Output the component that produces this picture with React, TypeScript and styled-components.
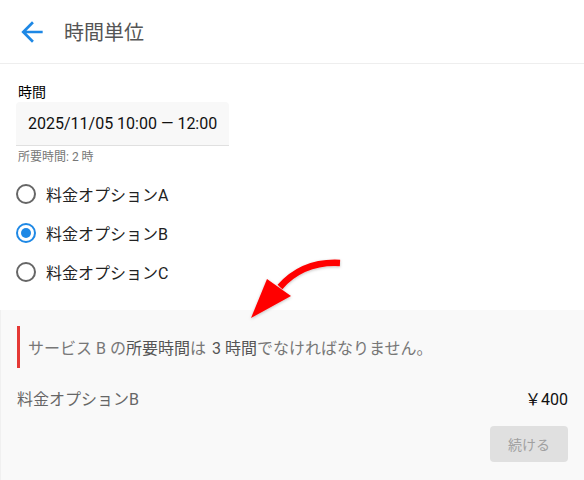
import React, { useState } from 'react';
import styled, { createGlobalStyle } from 'styled-components';
import { MdArrowBack } from 'react-icons/md';

const GlobalStyle = createGlobalStyle`
  html, body {
    margin: 0;
    padding: 0;
    background: #fff;
  }
  body {
    font-family: Roboto, "Noto Sans CJK JP", sans-serif;
    color: #212121;
  }
`;

const options = ['料金オプションA', '料金オプションB', '料金オプションC'];

const App = (): JSX.Element => {
  const [selected, setSelected] = useState(1);
  return (
    <Page>
      <GlobalStyle />
      <Header>
        <BackIcon />
        <Title>時間単位</Title>
      </Header>
      <Content>
        <FieldLabel>時間</FieldLabel>
        <TimeBox>2025/11/05 10:00 — 12:00</TimeBox>
        <Helper>所要時間: 2 時</Helper>
        <Radios>
          {options.map((opt, index) => (
            <RadioRow key={opt} onClick={() => setSelected(index)}>
              <RadioCircle checked={index === selected} />
              <span>{opt}</span>
            </RadioRow>
          ))}
        </Radios>
      </Content>
      <Panel>
        <Warning>
          サービス B の<Em>所要時間</Em>は<Em gap>3 時間</Em>でなければなりません。
        </Warning>
        <Summary>
          <SummaryName>{options[selected]}</SummaryName>
          <Price>￥400</Price>
        </Summary>
        <Actions>
          <ContinueButton disabled>続ける</ContinueButton>
        </Actions>
      </Panel>
      <Pointer width="584" height="480" viewBox="0 0 584 480">
        <defs>
          <filter id="shadow" x="-20%" y="-20%" width="140%" height="140%">
            <feDropShadow dx="0" dy="1" stdDeviation="1.5" floodColor="#000" floodOpacity="0.25" />
          </filter>
        </defs>
        <g filter="url(#shadow)" fill="#ff0000">
          <path d="M340 263 Q 303 261 280 287" stroke="#ff0000" strokeWidth="6.5" fill="none" />
          <polygon points="251,318 267,279 291,296" />
        </g>
      </Pointer>
    </Page>
  );
};

interface RadioProps {
  checked?: boolean;
}

interface EmProps {
  gap?: boolean;
}

const Page = styled.div`
  position: relative;
  width: 584px;
  height: 480px;
  display: flex;
  flex-direction: column;
  overflow: hidden;
`;

const Header = styled.header`
  height: 64px;
  flex: none;
  box-sizing: border-box;
  border-bottom: 1px solid #eeeeee;
  display: flex;
  align-items: center;
  padding-left: 16px;
`;

const BackIcon = styled(MdArrowBack)`
  font-size: 32px;
  color: #1e88e5;
`;

const Title = styled.h1`
  margin: 0 0 0 16px;
  font-size: 20px;
  font-weight: 400;
  color: #555;
`;

const Content = styled.div`
  padding: 20px 16px 0;
  flex: none;
`;

const FieldLabel = styled.div`
  font-size: 14px;
  line-height: 16px;
  color: #000;
  margin-bottom: 2px;
  padding-left: 2px;
`;

const TimeBox = styled.div`
  width: 213px;
  height: 44px;
  box-sizing: border-box;
  background: #f8f8f8;
  border-radius: 4px 4px 0 0;
  border-bottom: 1px solid #e0e0e0;
  display: flex;
  align-items: center;
  padding-left: 12px;
  font-size: 16px;
  color: #111;
`;

const Helper = styled.div`
  margin-top: 4px;
  padding-left: 2px;
  font-size: 12px;
  line-height: 14px;
  color: #777;
`;

const Radios = styled.div`
  margin-top: 10px;
  display: flex;
  flex-direction: column;
`;

const RadioRow = styled.label`
  height: 39px;
  display: flex;
  align-items: center;
  gap: 10px;
  font-size: 16px;
  color: #222;
  cursor: pointer;
`;

const RadioCircle = styled.span<RadioProps>`
  width: 20px;
  height: 20px;
  box-sizing: border-box;
  border-radius: 50%;
  border: 2px solid ${(p) => (p.checked ? '#1e88e5' : '#666')};
  display: flex;
  align-items: center;
  justify-content: center;
  &::after {
    content: '';
    width: 10px;
    height: 10px;
    border-radius: 50%;
    background: #1e88e5;
    display: ${(p) => (p.checked ? 'block' : 'none')};
  }
`;

const Panel = styled.div`
  margin-top: 19px;
  flex: 1;
  background: #f9f9f9;
  border-left: 1px solid #f0f0f0;
  padding: 16px 16px 0;
`;

const Warning = styled.div`
  border-left: 3px solid #e53935;
  height: 42px;
  display: flex;
  align-items: center;
  padding-left: 8px;
  font-size: 16px;
  color: #777;
`;

const Em = styled.span.withConfig({ shouldForwardProp: (prop) => prop !== 'gap' })<EmProps>`
  color: #555;
  margin-left: ${(p) => (p.gap ? '6px' : '0')};
`;

const Summary = styled.div`
  margin-top: 21px;
  display: flex;
  justify-content: space-between;
  align-items: center;
  font-size: 16px;
  line-height: 22px;
`;

const SummaryName = styled.span`
  color: #666;
`;

const Price = styled.span`
  color: #111;
`;

const Actions = styled.div`
  display: flex;
  justify-content: flex-end;
  margin-top: 15px;
`;

const ContinueButton = styled.button`
  width: 78px;
  height: 36px;
  border: none;
  border-radius: 4px;
  background: #e0e0e0;
  color: #a0a0a0;
  font-family: inherit;
  font-size: 14px;
`;

const Pointer = styled.svg`
  position: absolute;
  left: 0;
  top: 0;
  pointer-events: none;
`;

export default App;
